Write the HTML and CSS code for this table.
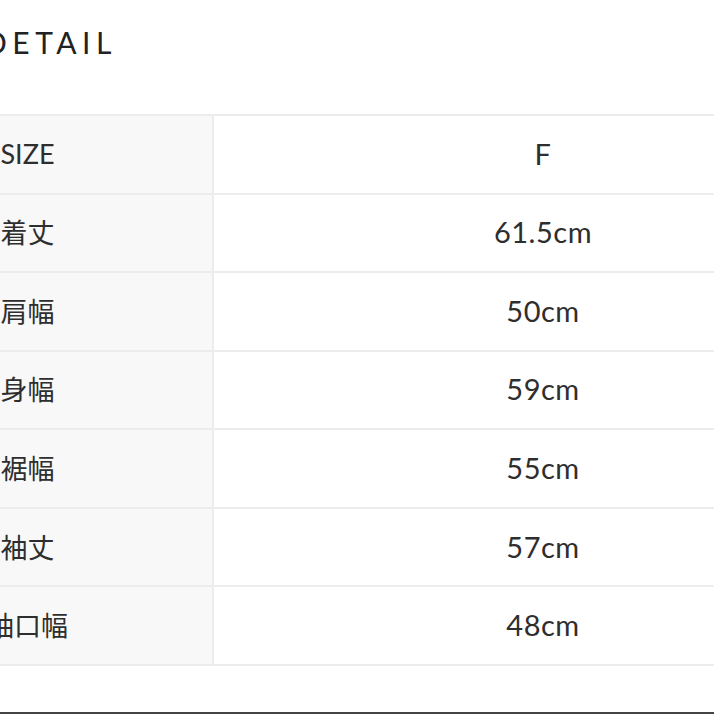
FILE: index.html
```html
<!DOCTYPE html>
<html lang="ja">
<head>
<meta charset="utf-8">
<link rel="stylesheet" href="styles.css">
</head>
<body>
<div class="page">
  <h2 class="title">DETAIL</h2>
  <div class="table">
    <div class="row"><div class="label">SIZE</div><div class="value">F</div></div>
    <div class="row"><div class="label">着丈</div><div class="value">61.5cm</div></div>
    <div class="row"><div class="label">肩幅</div><div class="value">50cm</div></div>
    <div class="row"><div class="label">身幅</div><div class="value">59cm</div></div>
    <div class="row"><div class="label">裾幅</div><div class="value">55cm</div></div>
    <div class="row"><div class="label">袖丈</div><div class="value">57cm</div></div>
    <div class="row"><div class="label">袖口幅</div><div class="value">48cm</div></div>
  </div>
  <div class="foot"></div>
</div>
</body>
</html>
```
FILE: styles.css
```css
html, body {
  margin: 0;
  padding: 0;
  background: #ffffff;
  overflow: hidden;
}
body {
  width: 714px;
  height: 714px;
}
.page {
  margin-left: -157px;
  width: 1029px;
  color: #2e2e2e;
  font-family: "Lato", "Noto Sans CJK JP", sans-serif;
}
.title {
  margin: 0;
  height: 114px;
  box-sizing: border-box;
  padding: 22px 0 0 141px;
  font-size: 30px;
  font-weight: 400;
  letter-spacing: 5.5px;
  line-height: 40px;
  color: #222;
}
.table {
  border-top: 2px solid #ececec;
}
.row {
  display: grid;
  grid-template-columns: 369px 2px 1fr;
  height: 78.57px;
  box-sizing: border-box;
  border-bottom: 2px solid #ececec;
}
.label {
  grid-column: 1;
  background: #f8f8f8;
  display: flex;
  align-items: center;
  justify-content: center;
  font-size: 27px;
  font-weight: 400;
  padding-bottom: 2px;
}
.value {
  grid-column: 3;
  display: flex;
  align-items: center;
  justify-content: center;
  font-size: 29px;
  letter-spacing: 0.5px;
  padding-bottom: 2px;
}
.row::before {
  content: "";
  grid-column: 2;
  grid-row: 1;
  background: #ececec;
}
.foot {
  margin-top: 46px;
  height: 3px;
  background: #444444;
}
```
